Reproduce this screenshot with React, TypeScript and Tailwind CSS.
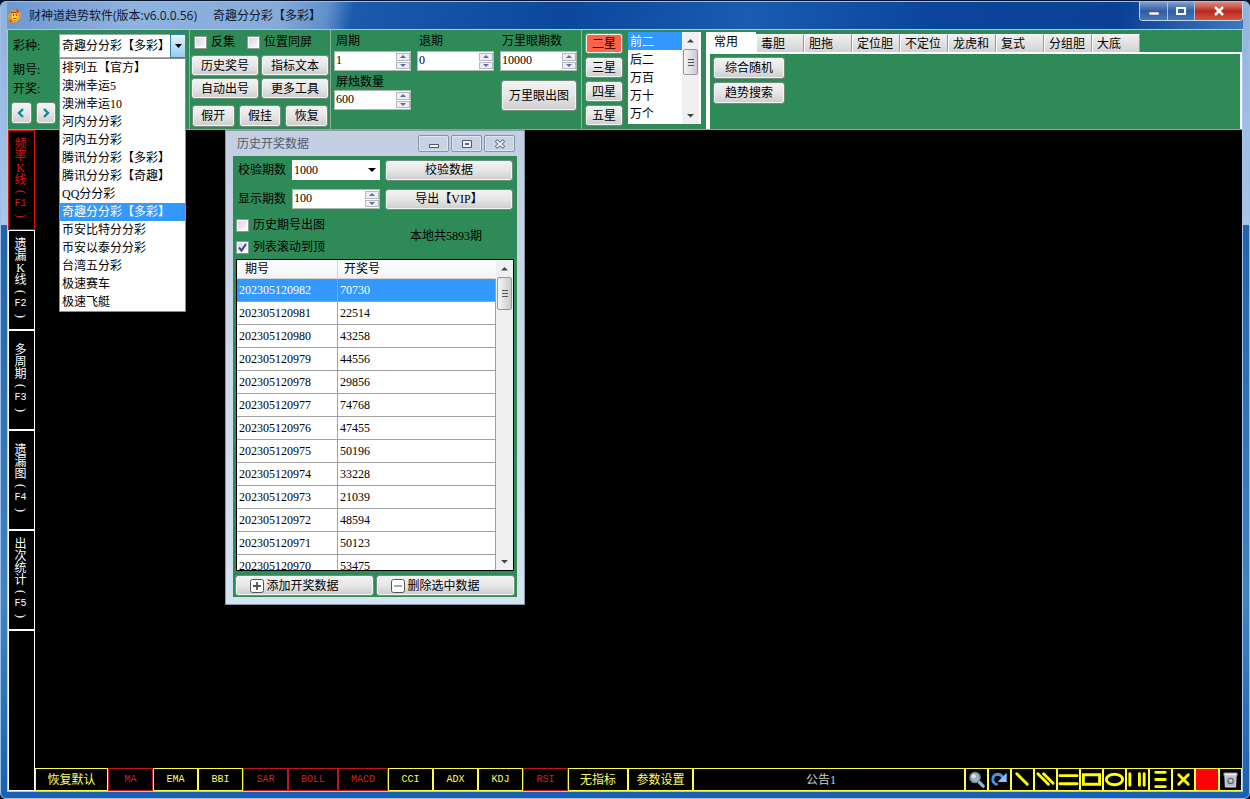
import { useState } from "react"
import type { ReactNode } from "react"
import clsx from "clsx"

const lotteries = [
  "排列五【官方】",
  "澳洲幸运5",
  "澳洲幸运10",
  "河内分分彩",
  "河内五分彩",
  "腾讯分分彩【多彩】",
  "腾讯分分彩【奇趣】",
  "QQ分分彩",
  "奇趣分分彩【多彩】",
  "币安比特分分彩",
  "币安以泰分分彩",
  "台湾五分彩",
  "极速赛车",
  "极速飞艇",
]

const draws = [
  ["202305120982", "70730"],
  ["202305120981", "22514"],
  ["202305120980", "43258"],
  ["202305120979", "44556"],
  ["202305120978", "29856"],
  ["202305120977", "74768"],
  ["202305120976", "47455"],
  ["202305120975", "50196"],
  ["202305120974", "33228"],
  ["202305120973", "21039"],
  ["202305120972", "48594"],
  ["202305120971", "50123"],
  ["202305120970", "53475"],
]

const charts = [
  { chars: ["频", "率", "K", "线"], key: "F1" },
  { chars: ["遗", "漏", "K", "线"], key: "F2" },
  { chars: ["多", "周", "期"], key: "F3" },
  { chars: ["遗", "漏", "图"], key: "F4" },
  { chars: ["出", "次", "统", "计"], key: "F5" },
]

const indicators = [
  { name: "MA", off: true, width: "w-[45px]" },
  { name: "EMA", off: false, width: "w-[45px]" },
  { name: "BBI", off: false, width: "w-[45px]" },
  { name: "SAR", off: true, width: "w-[45px]" },
  { name: "BOLL", off: true, width: "w-[50px]" },
  { name: "MACD", off: true, width: "w-[50px]" },
  { name: "CCI", off: false, width: "w-[45px]" },
  { name: "ADX", off: false, width: "w-[45px]" },
  { name: "KDJ", off: false, width: "w-[45px]" },
  { name: "RSI", off: true, width: "w-[45px]" },
]

const betTabs = ["常用", "毒胆", "胆拖", "定位胆", "不定位", "龙虎和", "复式", "分组胆", "大底"]

const stars = ["二星", "三星", "四星", "五星"]

function Btn({ children, className }: { children: ReactNode; className?: string }) {
  return (
    <button
      type="button"
      className={clsx(
        "flex items-center justify-center whitespace-nowrap rounded-xs border border-[#f4f4f4] bg-linear-to-b from-[#f2f2f2] via-[#e6e6e6] to-[#cfcfcf] shadow-[0_0_0_1px_#6f8f7c]",
        className
      )}
    >
      {children}
    </button>
  )
}

function Spinner({ id, value, className }: { id: string; value: string; className?: string }) {
  return (
    <div className={clsx("flex h-5 border border-[#a9b8b0] bg-white", className)}>
      <input id={id} type="text" inputMode="numeric" defaultValue={value} className="h-4 w-full min-w-0 flex-1 px-px outline-none" />
      <div className="flex w-3.5 shrink-0 flex-col gap-px py-px">
        <button type="button" aria-label="+" className="flex flex-1 items-center justify-center border border-[#b4b9c4] bg-[#eceef2]">
          <svg viewBox="0 0 6 3" className="h-[3px] w-1.5" fill="#5d6f9e"><path d="M3 0 6 3H0z" /></svg>
        </button>
        <button type="button" aria-label="-" className="flex flex-1 items-center justify-center border border-[#b4b9c4] bg-[#eceef2]">
          <svg viewBox="0 0 6 3" className="h-[3px] w-1.5" fill="#5d6f9e"><path d="M0 0h6L3 3z" /></svg>
        </button>
      </div>
    </div>
  )
}

function Check({ label, checked }: { label: string; checked?: boolean }) {
  return (
    <label className="flex items-center gap-1">
      <span className="relative flex h-[13px] w-[13px]">
        <input
          type="checkbox"
          defaultChecked={checked}
          className="peer h-[13px] w-[13px] appearance-none border border-[#8e9a94] bg-linear-to-br from-[#d3d3da] to-white shadow-[inset_0_0_0_1px_#fff]"
        />
        <svg viewBox="0 0 13 13" className="pointer-events-none absolute inset-0 hidden peer-checked:block" fill="none" stroke="#2f4c8f" strokeWidth="2">
          <path d="M3 6.5 5.5 9.5 10 3" />
        </svg>
      </span>
      {label}
    </label>
  )
}

function Scrollbar({ thumb, className }: { thumb: string; className?: string }) {
  return (
    <div className={clsx("flex w-[17px] shrink-0 flex-col items-center bg-[#f0f0f0]", className)}>
      <svg viewBox="0 0 17 17" className="h-[17px] w-[17px] shrink-0" fill="#444"><path d="M8.500 7 12 10.500H5z" /></svg>
      <div className={clsx("flex w-[15px] flex-col items-center justify-center gap-0.5 rounded-xs border border-[#979797] bg-linear-to-r from-[#f5f5f5] to-[#cbcbcf]", thumb)}>
        <span className="h-px w-1.5 bg-[#555]" />
        <span className="h-px w-1.5 bg-[#555]" />
        <span className="h-px w-1.5 bg-[#555]" />
      </div>
      <svg viewBox="0 0 17 17" className="mt-auto h-[17px] w-[17px] shrink-0" fill="#444"><path d="M5 7h7l-3.500 3.500z" /></svg>
    </div>
  )
}

function TitleBar() {
  return (
    <header className="flex h-[27px] items-start justify-between bg-[linear-gradient(100deg,#6c97cf_0,#8fb2de_10%,#86abda_22%,#5f8fcb_26%,#1c5aac_28%,#0c479c_45%,#1a5cb0_60%,#0b459b_75%,#0a4195_90%,#3f78bf_100%)]">
      <div className="flex h-[27px] items-center gap-1.5">
        <svg viewBox="0 0 16 16" className="h-4 w-4">
          <path d="M3 5 5 1l2 2 3-2 1 3 3 1-1 5-3 4-4 1-4-3-1-4z" fill="#f0a010" />
          <path d="M5 4.500c2-1 5-1 6 1v5c-2 2-4 2-6 0z" fill="#ffdc4a" />
          <path d="M4 4.500h7M9 1.500l3 2" stroke="#d2380c" strokeWidth="1.300" />
          <path d="M6 9.500c1 1.500 3 1.500 4 0" stroke="#c2400c" fill="none" />
          <circle cx="6.500" cy="7" r=".8" fill="#5a2408" />
          <circle cx="9.500" cy="7" r=".8" fill="#5a2408" />
          <path d="M2 10l4 4-3 1z" fill="#e8590c" />
        </svg>
        <h1 className="flex gap-4 whitespace-pre font-['Open_Sans','Noto_Sans_CJK_SC',sans-serif] text-[12px] text-[#0a1830]">
          <span>财神道趋势软件(版本:v6.0.0.56)</span>
          <span>奇趣分分彩【多彩】</span>
        </h1>
      </div>
      <div className="flex h-[19px] overflow-hidden rounded-b border border-t-0 border-[#c3d5ea] text-white">
        <button type="button" aria-label="最小化" className="flex w-7 items-center justify-center border-r border-[#a9c1df] bg-linear-to-b from-[#7f9fce] via-[#315d9f] to-[#4778b8]">
          <svg viewBox="0 0 14 12" className="h-3 w-3.5"><path d="M2 7h10v3H2z" fill="#fff" stroke="#48536a" strokeWidth=".6" /></svg>
        </button>
        <button type="button" aria-label="最大化" className="flex w-[27px] items-center justify-center border-r border-[#a9c1df] bg-linear-to-b from-[#7f9fce] via-[#315d9f] to-[#4778b8]">
          <svg viewBox="0 0 14 12" className="h-3 w-3.5"><path d="M3 3h8v6H3z" fill="none" stroke="#fff" strokeWidth="2" /></svg>
        </button>
        <button type="button" aria-label="关闭" className="flex w-[47px] items-center justify-center bg-linear-to-b from-[#dd8b80] via-[#b8261c] to-[#d4543c]">
          <svg viewBox="0 0 14 12" className="h-3 w-3.5"><path d="m3 2 8 8M11 2 3 10" stroke="#fff" strokeWidth="2.500" /></svg>
        </button>
      </div>
    </header>
  )
}

function LotteryPicker() {
  const [lottery, setLottery] = useState("奇趣分分彩【多彩】")

  return (
    <div className="relative h-6 w-[127px]">
      <select
        id="lottery"
        value={lottery}
        onChange={(e) => setLottery(e.target.value)}
        className="block h-6 w-full appearance-none border border-[#9aa] bg-white pl-0.5 outline-none"
      >
        {lotteries.map((name) => (
          <option key={name}>{name}</option>
        ))}
      </select>
      <span className="pointer-events-none absolute inset-y-0 right-0 flex w-4 items-center justify-center border border-[#3c7fb1] bg-linear-to-b from-[#e3f3fc] to-[#94cdee]">
        <svg viewBox="0 0 7 4" className="h-1 w-[7px]"><path d="M0 0h7L3.500 4z" /></svg>
      </span>
      {/* opened list */}
      <ul role="listbox" className="absolute left-0 top-full z-20 w-full border border-[#8c8c8c] bg-white">
        {lotteries.map((name) => (
          <li
            key={name}
            role="option"
            aria-selected={name === lottery}
            onClick={() => setLottery(name)}
            className={clsx("h-[18px] whitespace-nowrap pl-0.5 leading-[18px]", name === lottery && "bg-[#3399ff] text-white")}
          >
            {name}
          </li>
        ))}
      </ul>
    </div>
  )
}

function Toolbar() {
  return (
    <div className="flex h-[100px] border-b border-[#8fa598] bg-[#2e8b57]">
      <section className="flex w-[182px] shrink-0 items-start gap-1 border-r border-[#8fb39d] pl-1 pt-1">
        <div className="flex w-[43px] flex-col">
          <label htmlFor="lottery" className="h-[25px] pl-px leading-6">彩种:</label>
          <span className="h-5 pl-px leading-[22px]">期号:</span>
          <span className="h-5 pl-px leading-5">开奖:</span>
          <div className="flex gap-1.5 pt-1">
            <Btn className="h-5 w-5">
              <svg viewBox="0 0 8 10" className="h-2.5 w-2"><path d="M6 1 2 5l4 4" fill="none" stroke="#0d8c9c" strokeWidth="2.400" /></svg>
            </Btn>
            <Btn className="h-5 w-5">
              <svg viewBox="0 0 8 10" className="h-2.5 w-2"><path d="m2 1 4 4-4 4" fill="none" stroke="#0d8c9c" strokeWidth="2.400" /></svg>
            </Btn>
          </div>
        </div>
        <LotteryPicker />
      </section>

      <section className="flex w-[141px] shrink-0 flex-col border-r border-[#8fb39d] px-0.5 pt-1">
        <div className="flex h-5 items-start gap-3 pl-0.5">
          <Check label="反集" />
          <Check label="位置同屏" />
        </div>
        <div className="grid grid-cols-2 gap-x-1 gap-y-1 pt-0.5">
          <Btn className="h-[19px]">历史奖号</Btn>
          <Btn className="h-[19px]">指标文本</Btn>
          <Btn className="h-[19px]">自动出号</Btn>
          <Btn className="h-[19px]">更多工具</Btn>
        </div>
        <div className="grid grid-cols-3 gap-1.5 px-px pt-2">
          <Btn className="h-5">假开</Btn>
          <Btn className="h-5">假挂</Btn>
          <Btn className="h-5">恢复</Btn>
        </div>
      </section>

      <section className="flex w-[251px] shrink-0 gap-1.5 border-r border-[#8fb39d] pl-[3px] pt-0.5">
        <div className="flex flex-col">
          <label htmlFor="cycle" className="h-[19px] pl-0.5 leading-[18px]">周期</label>
          <Spinner id="cycle" value="1" className="w-[77px]" />
          <label htmlFor="screen" className="h-[19px] pl-0.5 leading-[22px]">屏烛数量</label>
          <Spinner id="screen" value="600" className="w-[77px]" />
        </div>
        <div className="flex flex-col">
          <label htmlFor="back" className="h-[19px] pl-0.5 leading-[18px]">退期</label>
          <Spinner id="back" value="0" className="w-[77px]" />
        </div>
        <div className="flex flex-col">
          <label htmlFor="eye" className="h-[19px] pl-0.5 leading-[18px]">万里眼期数</label>
          <Spinner id="eye" value="10000" className="w-[77px]" />
          <Btn className="ml-0.5 mt-2.5 h-[29px] w-[74px]">万里眼出图</Btn>
        </div>
      </section>

      <section className="flex w-[123px] shrink-0 gap-1.5 pl-1 pt-0.5">
        <div className="flex w-9 flex-col gap-[5px] pt-0.5">
          {stars.map((star, i) => (
            <Btn key={star} className={clsx("h-[19px]", i === 0 && "bg-none bg-[#ff6347]")}>{star}</Btn>
          ))}
        </div>
        <div className="flex h-[92px] w-[73px] bg-white">
          <select
            size={5}
            aria-label="位置"
            defaultValue="前二"
            className="h-[92px] min-w-0 flex-1 overflow-hidden bg-white outline-none [scrollbar-width:none]"
          >
            {["前二", "后二", "万百", "万十", "万个"].map((pos) => (
              <option
                key={pos}
                className="h-[18px] min-h-0 p-0 pl-0.5 leading-[18px] text-black checked:bg-[linear-gradient(#3399ff,#3399ff)] checked:text-white"
              >
                {pos}
              </option>
            ))}
          </select>
          <Scrollbar thumb="h-[26px]" className="mr-0.5" />
        </div>
      </section>

      <section className="flex min-w-0 flex-1 flex-col pl-px pt-0.5">
        <div role="tablist" className="flex h-5 items-end">
          {betTabs.map((tab, i) => (
            <button
              key={tab}
              type="button"
              role="tab"
              aria-selected={i === 0}
              className={clsx(
                "whitespace-nowrap text-left",
                i === 0
                  ? "h-5 w-[50px] bg-white pl-2"
                  : "h-[18px] w-12 border-l border-t border-white border-r border-r-[#9a9a9a] bg-linear-to-b from-[#f0f0f0] to-[#d2d2d2] pl-1"
              )}
            >
              {tab}
            </button>
          ))}
        </div>
        <div className="flex flex-1 flex-col items-start gap-[5px] border-l-4 border-r-2 border-t-2 border-white pl-1 pt-1">
          <Btn className="h-5 w-[70px]">综合随机</Btn>
          <Btn className="h-5 w-[70px]">趋势搜索</Btn>
        </div>
      </section>
    </div>
  )
}

function ChartTabs() {
  return (
    <nav className="flex w-[27px] shrink-0 flex-col">
      {charts.map((chart, i) => (
        <button
          key={chart.key}
          type="button"
          className={clsx(
            "flex h-[100px] w-full flex-col items-center justify-center border pr-0.5 leading-3",
            i === 0 ? "border-[#e01010] text-[#e01010]" : "border-white text-white"
          )}
        >
          {chart.chars.map((c) => (
            <span key={c} className="h-3">{c}</span>
          ))}
          <span className="h-3 rotate-90">(</span>
          <span className="h-3 font-['Liberation_Mono',monospace] text-[10px]">{chart.key}</span>
          <span className="h-3 rotate-90">)</span>
        </button>
      ))}
      <div className="flex-1 border border-white" />
    </nav>
  )
}

function DialogButton({ label, children }: { label: string; children: ReactNode }) {
  return (
    <button
      type="button"
      aria-label={label}
      className="flex h-[17px] w-[31px] items-center justify-center rounded-xs border border-[#8592a8] bg-[#c7d3e3] shadow-[inset_0_0_0_1px_#dde6f0]"
    >
      <svg viewBox="0 0 12 10" className="h-2.5 w-3" fill="none" stroke="#4d5768">{children}</svg>
    </button>
  )
}

function HistoryDialog() {
  return (
    <div
      role="dialog"
      aria-labelledby="history-title"
      className="absolute left-[190px] top-0 flex h-[475px] w-[300px] flex-col border border-[#8d98a5] bg-linear-to-b from-[#c3cfe0] to-[#d6e4f0] px-[7px] pb-[7px]"
    >
      <div className="flex h-[25px] shrink-0 items-center justify-between pl-1 pr-0.5">
        <h2 id="history-title" className="text-[#4f5b6c]">历史开奖数据</h2>
        <div className="flex gap-0.5">
          <DialogButton label="最小化"><path d="M1.500 5.500h9v3h-9z" fill="#f4f6fa" /></DialogButton>
          <DialogButton label="最大化"><path d="M1.500 1.500h9v7h-9z" fill="#f4f6fa" /><path d="M4.500 4.500h3v1h-3z" /></DialogButton>
          <DialogButton label="关闭">
            <path d="m2 1.500 8 7M10 1.500l-8 7" strokeWidth="3.600" />
            <path d="m2.500 2 7 6M9.500 2l-7 6" stroke="#f4f6fa" strokeWidth="1.800" />
          </DialogButton>
        </div>
      </div>

      <div className="flex min-h-0 flex-1 flex-col bg-[#2e8b57] px-[3px] pt-1">
        <div className="grid grid-cols-[52px_88px_1fr] items-center gap-x-1 gap-y-[9px]">
          <label htmlFor="verify" className="pl-0.5">校验期数</label>
          <div className="relative">
            <select id="verify" className="block h-5 w-full appearance-none bg-white pl-0.5 outline-none">
              <option>1000</option>
            </select>
            <svg viewBox="0 0 8 4" className="pointer-events-none absolute right-1 top-2 h-1 w-2"><path d="M0 0h8L4 4z" /></svg>
          </div>
          <Btn className="mx-0.5 h-[19px]">校验数据</Btn>
          <label htmlFor="display" className="pl-0.5">显示期数</label>
          <Spinner id="display" value="100" />
          <Btn className="mx-0.5 h-[19px]">导出【VIP】</Btn>
        </div>
        <div className="flex items-center justify-between pb-1 pr-8 pt-2">
          <div className="flex flex-col gap-1.5">
            <Check label="历史期号出图" />
            <Check label="列表滚动到顶" checked />
          </div>
          <span>本地共5893期</span>
        </div>

        <div className="flex min-h-0 flex-1 overflow-hidden border border-black bg-white">
          <div className="min-w-0 flex-1 overflow-hidden">
            <table className="w-full table-fixed border-separate border-spacing-0 text-left">
              <thead>
                <tr className="h-[19px] bg-linear-to-b from-white to-[#f1f2f4]">
                  <th className="w-[101px] border-b border-r border-[#d5d5d5] p-0 pl-2 font-normal leading-[18px]">期号</th>
                  <th className="border-b border-[#d5d5d5] p-0 pl-1.5 font-normal leading-[18px]">开奖号</th>
                </tr>
              </thead>
              <tbody>
                {draws.map(([issue, code], i) => (
                  <tr key={issue} className={clsx("h-[23px]", i === 0 && "bg-[#3399ff] text-white")}>
                    <td className="border-b border-r border-[#a0a0a0] p-0 pl-0.5 leading-[22px]">{issue}</td>
                    <td className="border-b border-r border-[#a0a0a0] p-0 pl-0.5 leading-[22px]">{code}</td>
                  </tr>
                ))}
              </tbody>
            </table>
          </div>
          <Scrollbar thumb="h-[33px]" />
        </div>

        <div className="grid shrink-0 grid-cols-2 gap-1 pb-0.5 pt-[5px]">
          <Btn className="h-[19px] gap-0.5 pr-5">
            <svg viewBox="0 0 14 14" className="h-3.5 w-3.5" fill="#fff" stroke="#555"><rect x=".5" y=".5" width="13" height="13" rx="2" /><path d="M3 7h8M7 3v8" strokeWidth="1.800" /></svg>
            添加开奖数据
          </Btn>
          <Btn className="h-[19px] gap-0.5 pr-5">
            <svg viewBox="0 0 14 14" className="h-3.5 w-3.5" fill="#fff" stroke="#555"><rect x=".5" y=".5" width="13" height="13" rx="2" /><path d="M3 7h8" /></svg>
            删除选中数据
          </Btn>
        </div>
      </div>
    </div>
  )
}

const tools: { name: string; icon: ReactNode }[] = [
  {
    name: "放大",
    icon: (
      <>
        <path d="m14 14 4 4" stroke="#8cb8e0" strokeWidth="3.500" strokeLinecap="round" />
        <circle cx="9.500" cy="9" r="6" fill="#6f8f92" />
        <circle cx="9.500" cy="9" r="4.500" fill="#9fb4b4" />
        <circle cx="8" cy="7.500" r="2.200" fill="#dce8e8" />
      </>
    ),
  },
  {
    name: "重做",
    icon: (
      <>
        <path d="M8 16C2 14 3 6 9 5.500c3 0 4.500 1.500 5.500 3.500" fill="none" stroke="#4a8ee8" strokeWidth="3" />
        <path d="M18.500 4v9.500H9z" fill="#8cc0ff" />
      </>
    ),
  },
  { name: "线段", icon: <path d="m5 5 11 11" /> },
  { name: "平行线", icon: <path d="m3 5 11 11M9 5l10 10" /> },
  { name: "水平线", icon: <path d="M2 7h18M2 15.500h18" /> },
  { name: "矩形", icon: <path d="M2.500 6h17v10h-17z" /> },
  { name: "椭圆", icon: <ellipse cx="11" cy="11" rx="8.500" ry="5.500" /> },
  { name: "垂直线", icon: <path d="M3 5v12M13 5v12M18 5v12" /> },
  { name: "分割线", icon: <path d="M6 3.500h10M6 11h10M6 18.500h10" /> },
  { name: "删除", icon: <path d="m6 6 10 10M16 6 6 16" /> },
]

function BottomBar() {
  return (
    <footer className="flex h-[23px] shrink-0 text-[#ffff60]">
      <button type="button" className="w-[73px] border border-[#ffff40]">恢复默认</button>
      {indicators.map((item) => (
        <button
          key={item.name}
          type="button"
          className={clsx(
            "border font-['Liberation_Mono',monospace] text-[10px]",
            item.width,
            item.off ? "border-[#c01818] text-[#d02020]" : "border-[#ffff40]"
          )}
        >
          {item.name}
        </button>
      ))}
      <button type="button" className="w-[60px] border border-[#ffff40]">无指标</button>
      <button type="button" className="w-[65px] border border-[#ffff40]">参数设置</button>
      <div className="flex flex-1 items-center justify-center border border-[#ffff40] pr-4 text-[#d0d0d0]">公告1</div>
      {tools.map((tool) => (
        <button key={tool.name} type="button" aria-label={tool.name} className="flex w-[23px] items-center justify-center border border-[#ffff40]">
          <svg viewBox="0 0 22 22" className="h-[21px] w-[21px]" fill="none" stroke="none">
            <g stroke={tool.name === "放大" || tool.name === "重做" ? "none" : "#ffff00"} strokeWidth="3" strokeLinecap="round">
              {tool.icon}
            </g>
          </svg>
        </button>
      ))}
      <button type="button" aria-label="颜色" className="w-6 border border-[#ffff40] bg-[#ff0000]" />
      <button type="button" aria-label="清空" className="flex w-[23px] items-center justify-center border border-[#ffff40]">
        <svg viewBox="0 0 16 18" className="h-[17px] w-[15px]">
          <path d="M1 2h14v3H1z" fill="#f0f0f4" stroke="#8a8a98" />
          <path d="M2 5h12l-.5 12h-11z" fill="#b9bac6" stroke="#e0e0e6" />
          <circle cx="8" cy="10.500" r="2.800" fill="none" stroke="#5a5c70" strokeWidth="1.200" />
          <path d="m8 9 2 2" stroke="#f0f0f4" />
        </svg>
      </button>
    </footer>
  )
}

export default function App() {
  return (
    <div className="flex min-h-screen flex-col bg-[#06152c] font-['Liberation_Serif','Noto_Sans_CJK_SC',serif] text-[12px] leading-4 text-black">
      <div className="mt-px flex flex-1 flex-col overflow-hidden rounded-md border border-[#9fc0e4] bg-[linear-gradient(#8fb2de_0,#a8c6e8_28%,#1f62ae_28%,#3f84c4_75%,#1860b4_100%)] px-[6px] pb-[6px]">
        <TitleBar />
        <div className="flex flex-1 flex-col border border-[#a6c8ea] bg-black">
          <Toolbar />
          <div className="flex flex-1">
            <ChartTabs />
            <main className="relative flex min-w-0 flex-1 flex-col">
              <div className="flex-1" />
              <HistoryDialog />
              <BottomBar />
            </main>
          </div>
        </div>
      </div>
    </div>
  )
}
